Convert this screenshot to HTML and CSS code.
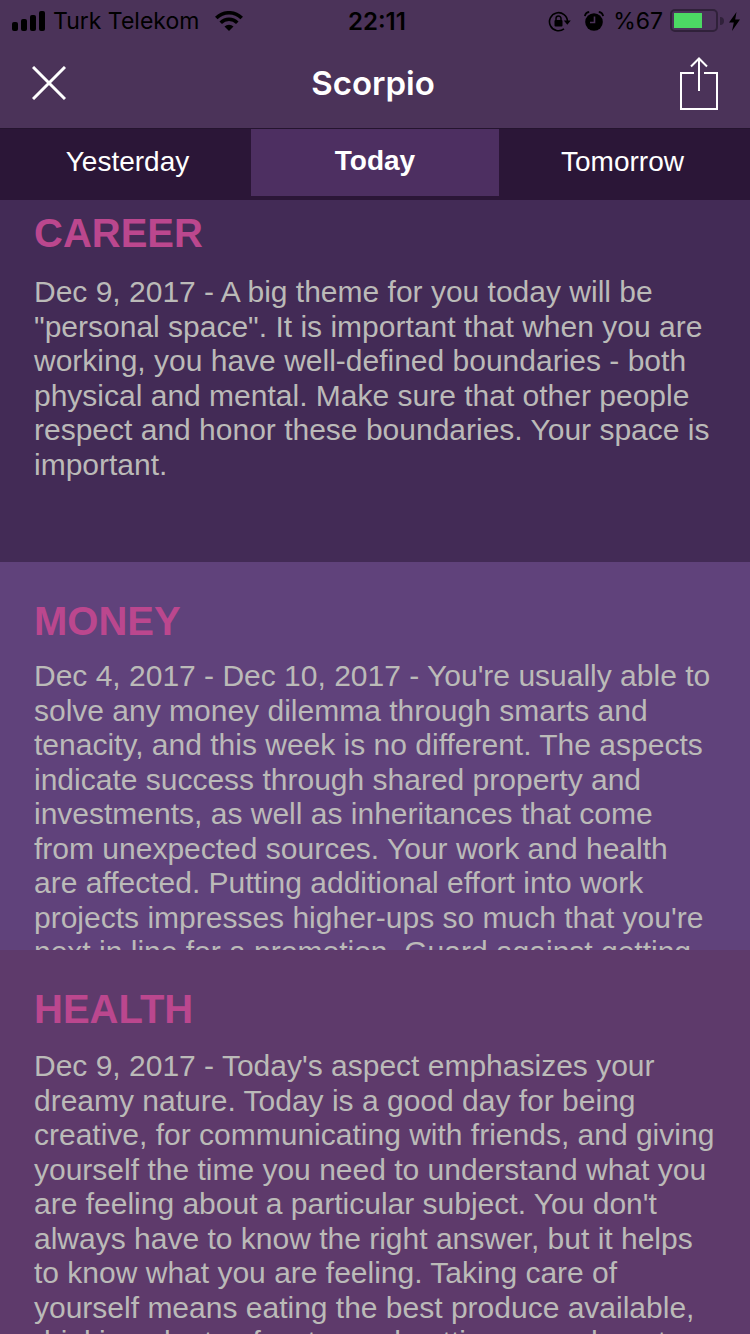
FILE: index.html
```html
<!DOCTYPE html>
<html lang="en">
<head>
<meta charset="utf-8">
<meta name="viewport" content="width=device-width">
<title>Scorpio</title>
<link rel="stylesheet" href="styles.css">
</head>
<body>
<div class="screen">
  <header class="header">
    <div class="status">
      <div class="status-left">
        <svg width="34" height="20" viewBox="0 0 34 20" aria-hidden="true"><rect x="0" y="11" width="6" height="9" rx="2"/><rect x="9" y="8" width="6" height="12" rx="2"/><rect x="18" y="4" width="6" height="16" rx="2"/><rect x="27" y="0" width="6" height="20" rx="2"/></svg>
        <span class="carrier">Turk Telekom</span>
        <svg class="wifi" width="28" height="20" viewBox="0 0 28 20" aria-hidden="true"><path d="M14 20l-4.500-4.500a6.400 6.400 0 0 1 9 0z"/><path d="M1.300 7a18 18 0 0 1 25.400 0M5.700 11.700a11.800 11.800 0 0 1 16.600 0" fill="none" stroke="#000" stroke-width="3.600"/></svg>
      </div>
      <span class="clock">22:11</span>
      <div class="status-right">
        <svg width="23" height="21" viewBox="0 0 23 21" aria-hidden="true"><path d="M19.500 10.500A9 9 0 1 0 16 17.800" fill="none" stroke="#000" stroke-width="1.600"/><path d="M15.800 9.500h7l-3.500 4.200z"/><rect x="6.500" y="9" width="8" height="6.500" rx="1"/><path d="M8 9.500V7.500a2.500 2.500 0 0 1 5 0v2" fill="none" stroke="#000" stroke-width="1.500"/></svg>
        <svg class="alarm" width="20" height="20" viewBox="0 0 20 20" aria-hidden="true"><circle cx="10" cy="11" r="8.800"/><path d="M.9 5.200A5 5 0 0 1 5.200 1M19.100 5.200A5 5 0 0 0 14.800 1" fill="none" stroke="#000" stroke-width="1.800"/><path d="M10.500 5.500v6H6" fill="none" stroke="#4b3359" stroke-width="1.600"/></svg>
        <span class="percent">%67</span>
        <svg width="54" height="24" viewBox="0 0 54 24" aria-hidden="true"><rect x="1" y="1" width="46" height="21" rx="4" fill="none" stroke="#30213a" stroke-width="2"/><rect x="4" y="4" width="28" height="15" fill="#4cd964"/><path d="M50 8a4 4 0 0 1 0 8z" fill="#30213a"/></svg>
        <svg class="bolt" width="11" height="19" viewBox="0 0 11 19" aria-hidden="true"><path d="M7.500 0L0 10.500h4.800L3 19 11 7.500H6.200z"/></svg>
      </div>
    </div>
    <div class="navbar">
      <button class="icon-button" type="button" aria-label="Close"><svg width="34" height="34" viewBox="0 0 34 34"><path d="M1 1l32 32M33 1L1 33" fill="none" stroke="#fff" stroke-width="3"/></svg></button>
      <h1 class="title">Scorpio</h1>
      <button class="icon-button" type="button" aria-label="Share"><svg width="38" height="53" viewBox="0 0 38 53"><path d="M14 16H1v36h36V16H24M19 34V2M11 9.500L19 1.500l8 8" fill="none" stroke="#fff" stroke-width="2"/></svg></button>
    </div>
  </header>
  <nav class="tabs">
    <button class="tab tab-first" type="button">Yesterday</button>
    <button class="tab tab-active" type="button">Today</button>
    <button class="tab tab-last" type="button">Tomorrow</button>
  </nav>
  <main class="readings">
    <section class="reading career">
      <h2 class="heading">CAREER</h2>
      <p class="text">Dec 9, 2017 - A big theme for you today will be "personal space". It is important that when you are working, you have well-defined boundaries - both physical and mental. Make sure that other people respect and honor these boundaries. Your space is important.</p>
    </section>
    <section class="reading money">
      <h2 class="heading">MONEY</h2>
      <p class="text">Dec 4, 2017 - Dec 10, 2017 - You're usually able to solve any money dilemma through smarts and tenacity, and this week is no different. The aspects indicate success through shared property and investments, as well as inheritances that come from unexpected sources. Your work and health are affected. Putting additional effort into work projects impresses higher-ups so much that you're next in line for a promotion. Guard against getting</p>
    </section>
    <section class="reading health">
      <h2 class="heading">HEALTH</h2>
      <p class="text">Dec 9, 2017 - Today's aspect emphasizes your dreamy nature. Today is a good day for being creative, for communicating with friends, and giving yourself the time you need to understand what you are feeling about a particular subject. You don't always have to know the right answer, but it helps to know what you are feeling. Taking care of yourself means eating the best produce available, drinking plenty of water and getting enough rest</p>
    </section>
  </main>
</div>
</body>
</html>
```
FILE: styles.css
```css
* { box-sizing: border-box; }
body { margin: 0; background: #5e3a6b; font-family: "Liberation Sans", Arial, sans-serif; }
button { border: 0; padding: 0; margin: 0; background: none; color: inherit; font: inherit; cursor: pointer; }
svg { display: block; flex: none; }
.screen { display: flex; flex-direction: column; height: 100vh; overflow: hidden; }
.header { flex: none; background: #4b3359; border-bottom: 1px solid #25142f; }
.status { display: grid; grid-template-columns: 1fr auto 1fr; align-items: center; height: 42px; padding: 0 10px 0 12px; font-family: Inter, sans-serif; font-size: 23px; color: #000; }
.status-left, .status-right { display: flex; align-items: center; }
.status-right { justify-content: flex-end; }
.carrier { margin-left: 7px; }
.wifi { margin-left: 16px; }
.clock { padding-left: 2px; font-size: 24px; font-weight: 600; }
.alarm { margin-left: 13px; }
.percent { margin: 0 7px 0 9px; }
.bolt { margin-left: 5px; }
.navbar { display: flex; align-items: center; justify-content: space-between; height: 86px; padding: 0 32px 4px; color: #fff; }
.title { margin: 0; font-family: Inter, sans-serif; font-size: 33px; font-weight: 600; }
.tabs { flex: none; display: grid; grid-template-columns: 251fr 248fr 251fr; height: 71px; padding-bottom: 4px; background: #2b1637; color: #fff; font-size: 28px; }
.tab { padding-bottom: 2px; }
.tab-first { padding-left: 4px; }
.tab-last { padding-right: 4px; }
.tab-active { padding-bottom: 4px; background: #4d2f61; font-weight: 700; }
.readings { flex: 1; min-height: 0; overflow: hidden; }
.reading { height: 388px; padding: 35px 34px 0; overflow: hidden; }
.heading { margin: 0; font-size: 40px; line-height: 48px; color: #bb478e; }
.text { margin: 14px 0 0; font-size: 30px; line-height: 1.15; color: #bbbab8; }
.career { height: 362px; padding-top: 9px; background: #432b56; }
.career .text { margin-top: 18px; }
.money { background: #60427b; }
.health { background: #5e3a6b; }
.health .text { margin-top: 16px; }
```
